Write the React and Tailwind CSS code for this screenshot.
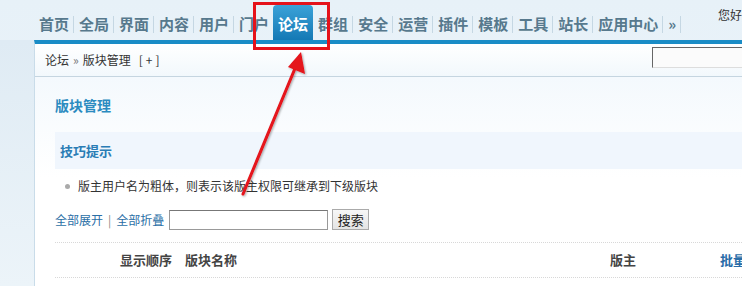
import React from 'react';

const navItems = ['首页', '全局', '界面', '内容', '用户', '门户', '论坛', '群组', '安全', '运营', '插件', '模板', '工具', '站长', '应用中心', '»'];

const NavItem = ({ label, active, noSep }) => {
  if (active) {
    return (
      <div className="shrink-0 h-[35px] mt-[5px] pl-[5px] pr-[5px] rounded-t-[4px] bg-gradient-to-b from-[#3aa2d8] to-[#1379b5] text-white font-bold flex items-center pt-[3px]">
        {label}
      </div>
    );
  }
  return (
    <div className="shrink-0 h-[40px] flex items-center pt-[8px]">
      <span className="pl-[5px] pr-[4px] text-[#57798d] font-bold">{label}</span>
      {!noSep && <span className="w-px h-[17px] bg-[#c5d7e3]" />}
    </div>
  );
};

export default function App() {
  return (
    <div
      className="relative w-[742px] h-[286px] overflow-hidden bg-gradient-to-b from-[#e7f1f8] to-[#eef5fa] text-[12px] text-[#333]"
      style={{ fontFamily: '"Noto Sans CJK SC", "Liberation Sans", sans-serif' }}
    >
      {/* top nav */}
      <div className="h-[40px] flex items-start pl-[34px] text-[15px] leading-[20px] whitespace-nowrap">
        {navItems.map((n) => (
          <NavItem key={n} label={n} active={n === '论坛'} noSep={n === '门户'} />
        ))}
        <div className="ml-auto pt-[7px] text-[12px] leading-[16px]">您好</div>
      </div>

      <div className="flex h-[246px]">
        <div className="w-[34px] shrink-0 bg-gradient-to-b from-[#dfebf4] to-[#ecf4f9]" />
        <div className="w-[800px] shrink-0 border-t-4 border-[#1a8cc6] border-l border-l-[#c9dce9] bg-white whitespace-nowrap">
          {/* breadcrumb */}
          <div className="h-[33px] flex items-center pl-[10px] border-b border-[#c5d5e0] bg-gradient-to-b from-white to-[#f2f8fc]">
            <span>论坛</span>
            <span className="mx-[4px] text-[#777]">»</span>
            <span>版块管理</span>
            <span className="ml-[8px] tracking-[3px]">[+]</span>
            <div className="ml-[489px] mt-[-6px] w-[120px] h-[21px] border-t border-l border-[#666] border-r border-b border-r-[#ddd] border-b-[#ddd] bg-[#fbfbfb]" />
          </div>

          {/* content */}
          <div className="pl-[20px] pt-[18px] bg-gradient-to-b from-[#f4f9fd] via-white to-white">
            <div className="text-[14px] leading-[20px] font-bold text-[#2b8bc0]">版块管理</div>
            <div className="mt-[17px] h-[37px] bg-[#f0f6fd] flex items-center pl-[5px] text-[13px] font-bold text-[#2a7db5]">
              技巧提示
            </div>
            <div className="mt-[7px] h-[20px] flex items-center pl-[10px]">
              <span className="w-[5px] h-[5px] rounded-full bg-[#aaa] mr-[8px]" />
              <span>版主用户名为粗体，则表示该版主权限可继承到下级版块</span>
            </div>
            <div className="mt-[13px] flex items-center h-[21px]">
              <span className="text-[#2b6fa6]">全部展开</span>
              <span className="mx-[5px] text-[#888]">|</span>
              <span className="text-[#2b6fa6]">全部折叠</span>
              <div className="ml-[5px] w-[159px] h-[20px] border border-[#999] border-t-[#777] bg-white" />
              <div className="ml-[4px] w-[37px] h-[21px] border border-[#aaa] bg-gradient-to-b from-[#f7f7f7] to-[#e4e4e4] flex items-center justify-center text-[13px] text-[#222]">
                搜索
              </div>
            </div>
            <div className="mt-[12px] border-t border-dotted border-[#d8d8d8]" />
            <div className="h-[34px] flex items-center font-bold text-[13px] text-[#444]">
              <span className="ml-[65px]">显示顺序</span>
              <span className="ml-[13px]">版块名称</span>
              <span className="ml-[373px]">版主</span>
              <span className="ml-[84px] text-[#2a6da8]">批量</span>
            </div>
            <div className="border-t border-dotted border-[#d8d8d8]" />
          </div>
        </div>
      </div>

      {/* annotation */}
      <div className="absolute left-[253px] top-[2px] w-[77px] h-[48px] border-[3px] border-[#e5121a]" />
      <svg className="absolute left-0 top-0" width="742" height="286" viewBox="0 0 742 286">
        <defs>
          <filter id="sh" x="-20%" y="-20%" width="140%" height="140%">
            <feDropShadow dx="1" dy="1" stdDeviation="1" floodColor="#000" floodOpacity="0.35" />
          </filter>
        </defs>
        <g filter="url(#sh)">
          <line x1="243" y1="194" x2="296" y2="66" stroke="#e5121a" strokeWidth="3" strokeLinecap="round" />
          <polygon points="301,52 305,74 288,67" fill="#e5121a" />
        </g>
      </svg>
    </div>
  );
}
